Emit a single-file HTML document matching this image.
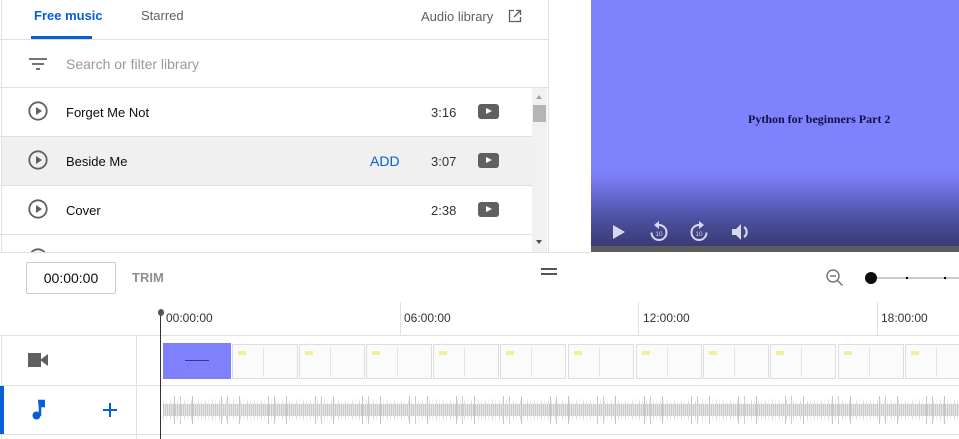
<!DOCTYPE html>
<html><head><meta charset="utf-8"><style>
*{box-sizing:border-box;margin:0;padding:0}
body{width:959px;height:439px;overflow:hidden;background:#fff;font-family:"Liberation Sans",sans-serif;position:relative;color:#0d0d0d}
.a{position:absolute}
.hl{position:absolute;height:1px;background:#e0e0e0}
.vl{position:absolute;width:1px;background:#e0e0e0}
.row{position:absolute;left:2px;width:530px;height:48px;font-size:13px}
.row .t{position:absolute;left:64px;top:17px}
.row .d{position:absolute;left:429px;top:17px;color:#333}
.yt{position:absolute;left:476px;top:16px;width:21px;height:15px;background:#606060;border-radius:3px}
.yt:after{content:"";position:absolute;left:8px;top:4px;border-left:6px solid #fff;border-top:3.5px solid transparent;border-bottom:3.5px solid transparent}
.pc{position:absolute;left:26px;top:13px}
.th{position:absolute;top:344px;width:66px;height:35px;background:#fbfbfb;border:1px solid #ddd}
.th:before{content:"";position:absolute;left:30px;top:2px;width:1px;height:30px;background:#e4e4e4}
.th:after{content:"";position:absolute;left:5px;top:6px;width:8px;height:4px;background:#f3ee9c}
</style></head><body>
<div class="a" style="left:34px;top:8px;font-size:13px;color:#065fd4;font-weight:bold">Free music</div>
<div class="a" style="left:31px;top:36px;width:61px;height:3px;background:#065fd4"></div>
<div class="a" style="left:141px;top:8px;font-size:13px;color:#606060">Starred</div>
<div class="a" style="left:421px;top:9px;font-size:13px;color:#606060">Audio library</div>
<svg class="a" style="left:508px;top:9px" width="14" height="14" viewBox="0 0 14 14"><path d="M6 1.5H1.5v11h11V8M8 1.5h4.5V6M12.5 1.5L6 8" stroke="#606060" stroke-width="1.3" fill="none"/></svg>
<div class="hl" style="left:0;top:39px;width:548px"></div>
<svg class="a" style="left:28px;top:57px" width="20" height="14"><path d="M1 2h18M4 7h12M8 12h4" stroke="#606060" stroke-width="1.8"/></svg>
<div class="a" style="left:66px;top:56px;font-size:14px;color:#9a9a9a">Search or filter library</div>
<div class="hl" style="left:0;top:87px;width:548px"></div>
<div class="vl" style="left:548px;top:0;height:252px"></div>
<div class="vl" style="left:1px;top:0;height:252px"></div>

<div class="row" style="top:88px"><svg class="pc" width="20" height="20"><circle cx="10" cy="10" r="8.7" stroke="#606060" stroke-width="1.8" fill="none"/><path d="M8 6v8l6-4z" fill="#606060"/></svg><span class="t">Forget Me Not</span><span class="d">3:16</span><span class="yt"></span></div>
<div class="hl" style="left:0;top:136px;width:532px"></div>
<div class="row" style="top:137px;background:#f0f0f0"><svg class="pc" width="20" height="20"><circle cx="10" cy="10" r="8.7" stroke="#606060" stroke-width="1.8" fill="none"/><path d="M8 6v8l6-4z" fill="#606060"/></svg><span class="t">Beside Me</span><span class="a" style="left:368px;top:16px;font-size:14px;color:#065fd4">ADD</span><span class="d">3:07</span><span class="yt"></span></div>
<div class="hl" style="left:0;top:185px;width:532px"></div>
<div class="row" style="top:186px"><svg class="pc" width="20" height="20"><circle cx="10" cy="10" r="8.7" stroke="#606060" stroke-width="1.8" fill="none"/><path d="M8 6v8l6-4z" fill="#606060"/></svg><span class="t">Cover</span><span class="d">2:38</span><span class="yt"></span></div>
<div class="hl" style="left:0;top:234px;width:532px"></div>
<svg class="a" style="left:28px;top:247px" width="20" height="5"><circle cx="10" cy="11" r="8.7" stroke="#606060" stroke-width="1.8" fill="none"/></svg>
<div class="a" style="left:532px;top:88px;width:15px;height:164px;background:#f1f1f1"></div>
<div class="a" style="left:536px;top:95px;border-bottom:4px solid #a3a3a3;border-left:3.5px solid transparent;border-right:3.5px solid transparent"></div>
<div class="a" style="left:533px;top:105px;width:13px;height:17px;background:#b5b5b5"></div>
<div class="a" style="left:536px;top:240px;border-top:4px solid #505050;border-left:3.5px solid transparent;border-right:3.5px solid transparent"></div>
<div class="hl" style="left:0;top:252px;width:591px"></div>

<div class="a" style="left:591px;top:0;width:368px;height:246px;background:linear-gradient(#7f82fd 0,#7f82fd 172px,#6064c8 200px,#4a4d98 222px,#393c75 246px)"></div>
<div class="a" style="left:591px;top:246px;width:368px;height:6px;background:#5d5d5d"></div>
<div class="a" style="left:748px;top:112px;font-family:'Liberation Serif',serif;font-weight:bold;font-size:12px;color:#111346">Python for beginners Part 2</div>
<svg class="a" style="left:612px;top:224px" width="14" height="16"><path d="M1 1v14l12-7z" fill="#d8d8ec"/></svg>
<svg class="a" style="left:649px;top:221px" width="20" height="22" viewBox="0 0 20 22"><path d="M10 4a7.5 7.5 0 1 1-7.5 7.5" stroke="#d8d8ec" stroke-width="2" fill="none"/><path d="M10 0v8L5 4z" fill="#d8d8ec"/><text x="10" y="15" font-size="6.5" fill="#d8d8ec" text-anchor="middle" font-family="Liberation Sans">10</text></svg>
<svg class="a" style="left:689px;top:221px" width="20" height="22" viewBox="0 0 20 22"><path d="M10 4a7.5 7.5 0 1 0 7.5 7.5" stroke="#d8d8ec" stroke-width="2" fill="none"/><path d="M10 0v8l5-4z" fill="#d8d8ec"/><text x="10" y="15" font-size="6.5" fill="#d8d8ec" text-anchor="middle" font-family="Liberation Sans">10</text></svg>
<svg class="a" style="left:731px;top:223px" width="20" height="18"><path d="M1 6h4l5-5v16l-5-5H1z" fill="#d8d8ec"/><path d="M13 4a6 6 0 0 1 0 10" stroke="#d8d8ec" stroke-width="2.2" fill="none"/></svg>

<div class="a" style="left:26px;top:262px;width:90px;height:32px;border:1px solid #ccc;border-radius:2px;font-size:14px;text-align:center;line-height:30px">00:00:00</div>
<div class="a" style="left:132px;top:270px;font-size:13px;color:#909090;font-weight:bold">TRIM</div>
<div class="a" style="left:541px;top:268px;width:16px;height:2px;background:#555"></div>
<div class="a" style="left:541px;top:273px;width:16px;height:2px;background:#555"></div>
<svg class="a" style="left:825px;top:268px" width="20" height="20"><circle cx="8" cy="8" r="6" stroke="#777" stroke-width="1.5" fill="none"/><path d="M5 8h6M12.5 12.5l5 5" stroke="#777" stroke-width="1.5"/></svg>
<div class="a" style="left:871px;top:277px;width:88px;height:2px;background:#ccc"></div>
<div class="a" style="left:865px;top:272px;width:12px;height:12px;border-radius:50%;background:#0d0d0d"></div>
<div class="a" style="left:906px;top:277px;width:2px;height:2px;background:#000"></div>
<div class="a" style="left:944px;top:277px;width:2px;height:2px;background:#000"></div>

<div class="a" style="left:166px;top:311px;font-size:12px;color:#333">00:00:00</div>
<div class="vl" style="left:400px;top:302px;height:33px"></div><div class="a" style="left:404px;top:311px;font-size:12px;color:#333">06:00:00</div>
<div class="vl" style="left:638px;top:302px;height:33px"></div><div class="a" style="left:643px;top:311px;font-size:12px;color:#333">12:00:00</div>
<div class="vl" style="left:877px;top:302px;height:33px"></div><div class="a" style="left:881px;top:311px;font-size:12px;color:#333">18:00:00</div>
<div class="hl" style="left:0;top:335px;width:959px"></div>
<div class="hl" style="left:0;top:385px;width:959px"></div>
<div class="hl" style="left:0;top:434px;width:959px"></div>
<div class="vl" style="left:136px;top:336px;height:103px"></div>
<div class="vl" style="left:1px;top:336px;height:103px"></div>

<svg class="a" style="left:28px;top:352px" width="20" height="16"><rect x="0" y="1" width="13" height="14" fill="#606060"/><path d="M12 8l8-6v12z" fill="#606060"/></svg>
<div class="a" style="left:163px;top:343px;width:68px;height:36px;background:#7f80fc"></div>
<div class="a" style="left:185px;top:360px;width:24px;height:1px;background:#333a80"></div>
<div class="th" style="left:232px"></div><div class="th" style="left:299px"></div><div class="th" style="left:366px"></div><div class="th" style="left:433px"></div><div class="th" style="left:500px"></div><div class="th" style="left:568px"></div><div class="th" style="left:636px"></div><div class="th" style="left:703px"></div><div class="th" style="left:770px"></div><div class="th" style="left:838px"></div><div class="th" style="left:905px"></div>

<div class="a" style="left:0;top:386px;width:4px;height:48px;background:#065fd4"></div>
<svg class="a" style="left:31px;top:399px" width="14" height="22"><path d="M7 2h6v5H9v10" stroke="#065fd4" stroke-width="2.5" fill="#065fd4"/><circle cx="5.5" cy="16.5" r="4" fill="#065fd4"/></svg>
<svg class="a" style="left:102px;top:402px" width="16" height="16"><path d="M8 1v14M1 8h14" stroke="#065fd4" stroke-width="2"/></svg>
<div class="a" style="left:163px;top:398px;width:796px;height:24px;background:repeating-linear-gradient(90deg,rgba(195,195,195,.9) 0 1px,transparent 1px 3px,rgba(195,195,195,.5) 3px 4px,transparent 4px 7px);-webkit-mask:linear-gradient(transparent 0,#000 30%,#000 70%,transparent 100%)"></div>
<div class="a" style="left:163px;top:404px;width:796px;height:12px;background:repeating-linear-gradient(90deg,#cacaca 0 1px,#e4e4e4 1px 2px)"></div>
<div class="a" style="left:163px;top:396px;width:796px;height:28px;background:repeating-linear-gradient(90deg,transparent 0 11px,#c6c6c6 11px 12px,transparent 12px 17px,#cecece 17px 18px,transparent 18px 29px,#c4c4c4 29px 30px,transparent 30px 47px)"></div>

<div class="a" style="left:160px;top:312px;width:1px;height:127px;background:#333"></div>
<div class="a" style="left:158px;top:309px;width:6px;height:7px;border-radius:50%;background:#555"></div>
</body></html>
